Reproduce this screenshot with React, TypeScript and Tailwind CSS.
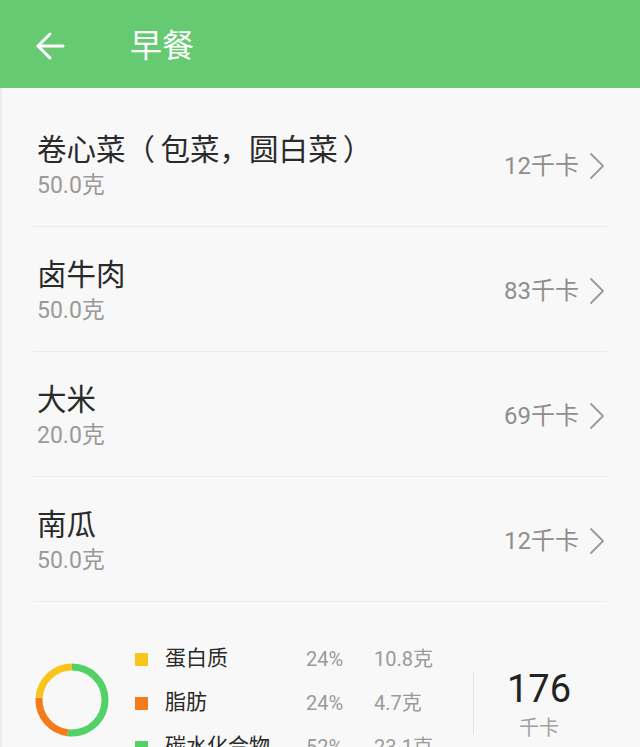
const foods = [
  { name: '卷心菜（包菜，圆白菜）', weight: '50.0克', kcal: 12 },
  { name: '卤牛肉', weight: '50.0克', kcal: 83 },
  { name: '大米', weight: '20.0克', kcal: 69 },
  { name: '南瓜', weight: '50.0克', kcal: 12 },
]

const nutrients = [
  { label: '蛋白质', pct: 24, grams: '10.8克', color: '#f8c51c' },
  { label: '脂肪', pct: 24, grams: '4.7克', color: '#f47b1c' },
  { label: '碳水化合物', pct: 52, grams: '23.1克', color: '#52d266' },
]

// the parentheses get a little extra room, like the Android font gives them
function FoodName({ text }: { text: string }) {
  return (
    <>
      {Array.from(text).map((ch, i) =>
        ch === '（' ? (
          <span key={i} className="inline-block w-[35px]">{ch}</span>
        ) : ch === '）' ? (
          <span key={i} className="pl-[5px]">{ch}</span>
        ) : (
          <span key={i}>{ch}</span>
        ),
      )}
    </>
  )
}

function Donut() {
  const r = 33
  const c = 2 * Math.PI * r
  // green first from 12 o'clock clockwise, then orange, then yellow
  const order = [nutrients[2], nutrients[1], nutrients[0]]
  let offset = 0
  return (
    <svg width="74" height="74" viewBox="0 0 74 74">
      <g transform="rotate(-90 37 37)">
        {order.map((n) => {
          const len = (n.pct / 100) * c
          const el = (
            <circle
              key={n.label}
              cx="37"
              cy="37"
              r={r}
              fill="none"
              stroke={n.color}
              strokeWidth="7"
              strokeDasharray={`${len} ${c - len}`}
              strokeDashoffset={-offset}
            />
          )
          offset += len
          return el
        })}
      </g>
    </svg>
  )
}

function Chevron() {
  return (
    <svg width="16" height="28" viewBox="0 0 16 28" fill="none" stroke="#9a9a9a" strokeWidth="1.8" strokeLinecap="round" strokeLinejoin="round">
      <path d="M2 2l12 12L2 26" />
    </svg>
  )
}

export default function App() {
  return (
    <div className="w-[640px] h-[747px] overflow-hidden bg-[#f8f8f8] font-['Roboto','Noto_Sans_CJK_SC',sans-serif]">
      <header className="h-[88px] bg-[#65ca72] flex items-center pt-[4px]">
        <svg className="ml-[35px]" width="30" height="30" viewBox="0 0 30 30" fill="none" stroke="white" strokeWidth="3" strokeLinecap="round" strokeLinejoin="round">
          <path d="M28 15H3" />
          <path d="M15 3L3 15l12 12" />
        </svg>
        <h1 className="ml-[65px] text-[32px] text-white leading-none">早餐</h1>
      </header>

      <div className="h-[659px] border-l-2 border-[#ececec]">
        <div className="ml-[31px] mr-[33px] pt-[14px]">
          {foods.map((f) => (
            <div key={f.name} className="h-[125px] border-b border-[#ececec] flex items-center justify-between">
              <div className="pl-[4px] pt-[7px]">
                <div className="text-[29.5px] leading-[36px] text-[#2a2a2a] whitespace-nowrap">
                  <FoodName text={f.name} />
                </div>
                <div className="text-[23px] leading-[36px] text-[#9a9a9a]">{f.weight}</div>
              </div>
              <div className="flex items-center text-[#8e8e8e] pt-[3px]">
                <span className="text-[24px]">{f.kcal}千卡</span>
                <span className="ml-[10px] mr-[2px]">
                  <Chevron />
                </span>
              </div>
            </div>
          ))}
        </div>

        <section className="pt-[35px] flex items-start">
          <div className="ml-[33px] mt-[26px] w-[74px] h-[74px]">
            <Donut />
          </div>
          <div className="ml-[26px] w-[338px]">
            {nutrients.map((n) => (
              <div key={n.label} className="h-[44px] flex items-center">
                <span className="w-[13px] h-[13px]" style={{ backgroundColor: n.color }} />
                <span className="ml-[17px] w-[141px] text-[21px] text-[#2a2a2a]">{n.label}</span>
                <span className="w-[68px] text-[20px] text-[#9a9a9a]">{n.pct}%</span>
                <span className="text-[20px] text-[#9a9a9a]">{n.grams}</span>
              </div>
            ))}
          </div>
          <div className="mt-[34px] w-px h-[63px] bg-[#e4e4e4]" />
          <div className="w-[130px] mt-[28px] flex flex-col items-center">
            <span className="text-[38px] leading-[48px] text-[#222]">176</span>
            <span className="text-[20px] leading-[30px] text-[#a0a0a0]">千卡</span>
          </div>
        </section>
      </div>
    </div>
  )
}
